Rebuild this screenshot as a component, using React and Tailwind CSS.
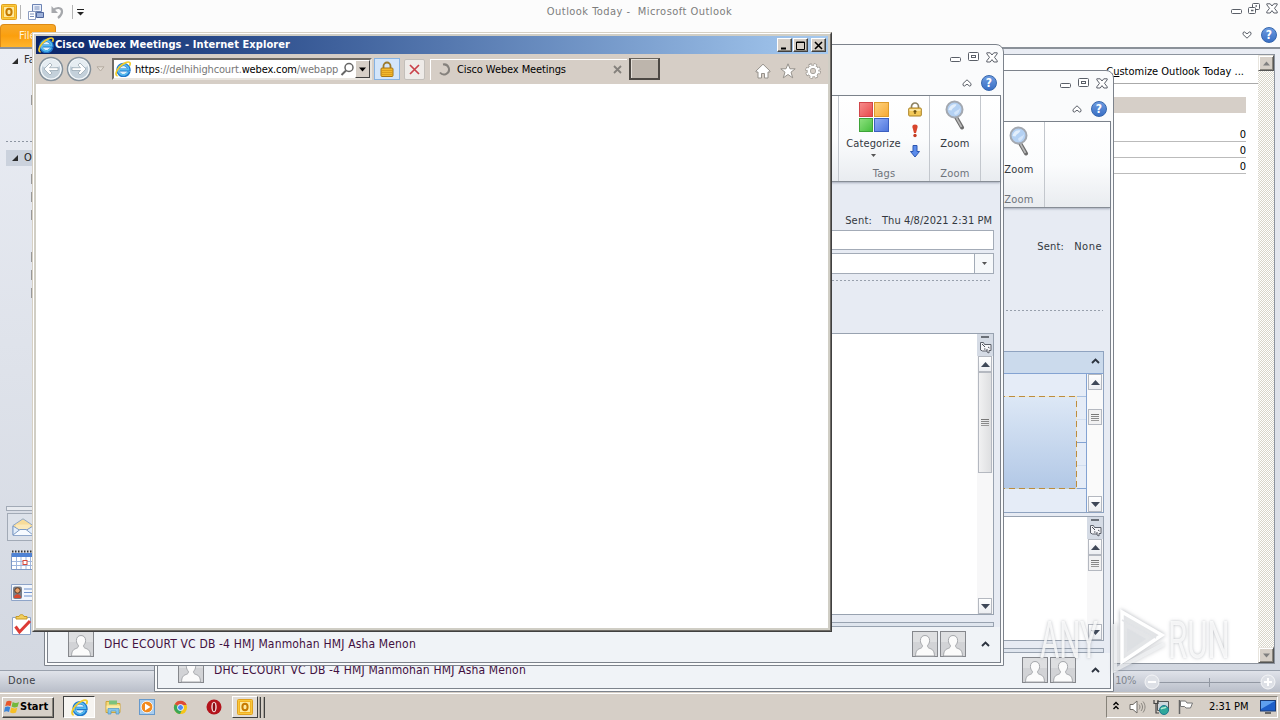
import clsx from "clsx";

/* ---------- icons ---------- */

function IeIcon({ size = 16 }) {
  return (
    <svg width={size} height={size} viewBox="0 0 16 16" className="shrink-0">
      <circle cx="8" cy="8.500" r="5" fill="#dff1fc" />
      <path
        d="M13.900 10.600A5.600 5.600 0 1 1 14.100 9H5"
        fill="none"
        stroke="#1f78cc"
        strokeWidth="3.200"
      />
      <path
        d="M13.300 10.600A5.200 5.200 0 1 1 13.600 8.600H5"
        fill="none"
        stroke="#58bdf0"
        strokeWidth="1.600"
      />
      <path
        d="M2.600 14.800C.2 14.800.4 10.600 4.200 6.400 8 2.200 13 .2 14.600 1.400c.9.7.6 2-.1 3.400"
        fill="none"
        stroke="#f2cb2a"
        strokeWidth="1.700"
      />
    </svg>
  );
}

function OutlookIcon({ size = 16 }) {
  return (
    <svg width={size} height={size} viewBox="0 0 16 16" className="shrink-0">
      <rect x=".5" y=".5" width="15" height="15" rx="1" fill="#f8c93c" stroke="#e0a020" />
      <rect x="2.5" y="2.5" width="11" height="11" fill="#fdeaa0" stroke="#f4b223" />
      <ellipse cx="8" cy="8" rx="2.6" ry="3.2" fill="none" stroke="#c67a00" strokeWidth="2" />
    </svg>
  );
}

function HelpIcon() {
  return (
    <span className="flex size-4 shrink-0 items-center justify-center rounded-full border border-[#3566ad] bg-linear-to-b from-[#6d9be0] to-[#3a6fc4] text-[12px] leading-none font-bold text-white">
      ?
    </span>
  );
}

function MinGlyph() {
  return (
    <svg width="11" height="12" viewBox="0 0 11 12">
      <rect x=".5" y="6.5" width="10" height="4" rx="1" fill="#fff" stroke="#5a5f68" />
    </svg>
  );
}

function MaxGlyph() {
  return (
    <svg width="11" height="12" viewBox="0 0 11 12">
      <rect x=".5" y="1.500" width="10" height="8" rx="1" fill="#fff" stroke="#5a5f68" />
      <rect x="3.5" y="4.5" width="4" height="2" fill="#fff" stroke="#5a5f68" />
    </svg>
  );
}

function RestoreGlyph() {
  return (
    <svg width="12" height="12" viewBox="0 0 12 12">
      <rect x="4.5" y=".5" width="7" height="6" rx="1" fill="#fff" stroke="#5a5f68" />
      <rect x=".5" y="4.5" width="7" height="6" rx="1" fill="#fff" stroke="#5a5f68" />
      <path d="M3 7.5h2.500M7.500 3H9" stroke="#5a5f68" strokeWidth="1.500" />
    </svg>
  );
}

function CloseGlyph() {
  return (
    <svg width="12" height="11" viewBox="0 0 12 11">
      <path
        d="M.8.8h3.4L6 3 7.800.8h3.400v1L8.500 5.300l2.700 3.500v1.200H7.800L6 7.600 4.200 10H.8V8.800L3.500 5.300.8 1.800z"
        fill="#fff"
        stroke="#5a5f68"
      />
    </svg>
  );
}

function Collapse({ down }) {
  return (
    <svg width="10" height="8" viewBox="0 0 10 8" className={clsx(down && "rotate-180")}>
      <path
        d="M5 .8 9 4.600v1.700L7.800 7.200 5 5.200 2.200 7.200 1 6.300V4.600z"
        fill="#fff"
        stroke="#5a5f68"
      />
    </svg>
  );
}

function Chevron() {
  return (
    <svg width="9" height="6" viewBox="0 0 9 6">
      <path d="M1 5 4.500 1.600 8 5" fill="none" stroke="#2c333f" strokeWidth="1.9" />
    </svg>
  );
}

function Person() {
  return (
    <svg width="26" height="26" viewBox="0 0 26 26" className="shrink-0">
      <rect x=".5" y=".5" width="25" height="25" fill="#d2d3d6" stroke="#85878c" />
      <path d="M1 1h24v10H1z" fill="#dedfe1" />
      <path
        d="M13 4.500c3 0 4.600 2.200 4.600 5 0 2-.8 3.600-1.900 4.700-.3 1.800.3 2.600 2 3.200 3 1 4.600 2.500 4.800 7.600h-19c.2-5.100 1.800-6.600 4.800-7.600 1.700-.6 2.300-1.400 2-3.200C9.200 13.100 8.400 11.500 8.400 9.500c0-2.800 1.600-5 4.600-5z"
        fill="#fbfbfb"
        stroke="#a5a7ab"
      />
    </svg>
  );
}

function ZoomIcon() {
  return (
    <svg width="20" height="30" viewBox="0 0 20 30">
      <path d="m11.500 18 5.500 9.500" stroke="#6d6d6d" strokeWidth="4" strokeLinecap="round" />
      <path d="m11.500 18 5 9" stroke="#b9b9b9" strokeWidth="1.600" />
      <circle cx="9.500" cy="9.500" r="8" fill="#b4d1f3" stroke="#a3a8b0" strokeWidth="2" />
      <path d="M3.500 10c1-4 4-6.500 8-5.500-1 3-4 3-5 6z" fill="#e3effc" />
      <path d="M9 13c2-3 4-2 6-5-.2 4-2.500 7-5 7z" fill="#d3e5fa" />
    </svg>
  );
}

function SplitIcon() {
  return (
    <svg width="13" height="13" viewBox="0 0 13 13">
      <path
        d="M1.500 1.500h3l1 2h6.500v6h-2v2.500l-2-1v-1H3.500l-2-1z"
        fill="#f5f5f8"
        stroke="#5c606a"
      />
      <path d="m3 3 3 3M9 6l1.500 1M5 8h1.500M8 8v2" stroke="#4a4f5a" />
    </svg>
  );
}

function Triangle({ up, className }) {
  return (
    <svg width="9" height="5" viewBox="0 0 9 5" className={clsx(up && "rotate-180", className)}>
      <path d="M0 0h9L4.500 5z" fill="currentColor" />
    </svg>
  );
}

function TreeArrow() {
  return (
    <svg width="6" height="6" viewBox="0 0 6 6" className="shrink-0">
      <path d="M6 0v6H0z" fill="#2b2b2b" />
    </svg>
  );
}

function ChromeIcon() {
  return (
    <svg width="15" height="15" viewBox="0 0 16 16">
      <circle cx="8" cy="8" r="7" fill="#f5c518" />
      <path d="M8 8 1.900 4.500A7 7 0 0 1 14.500 5.200H8z" fill="#dd4b39" />
      <path d="M8 8 1.900 4.500A7 7 0 0 0 7.500 15L10 9.500z" fill="#3aa757" />
      <circle cx="8" cy="8" r="3.200" fill="#4a8af4" stroke="#fff" />
    </svg>
  );
}

function LockIcon() {
  return (
    <svg width="14" height="16" viewBox="0 0 14 16">
      <path d="M3.500 8V5a3.500 3.500 0 0 1 7 0v3" fill="none" stroke="#9c7a2c" strokeWidth="1.800" />
      <rect x="1" y="7" width="12" height="8.500" rx="1" fill="#f2b92e" stroke="#a87512" />
      <path d="M2 9.500h10M2 11.500h10M2 13.500h10" stroke="#d4941c" strokeWidth=".8" />
    </svg>
  );
}

function PermissionIcon() {
  return (
    <svg width="14" height="15" viewBox="0 0 14 15">
      <path d="M3.500 7V4.500a3.500 3.500 0 0 1 7 0V7" fill="none" stroke="#8d8262" strokeWidth="1.700" />
      <rect x=".7" y="6" width="12.600" height="8" rx="1" fill="#f3c95a" stroke="#a98024" />
      <path d="M1.500 7h11v2h-11z" fill="#fbe39a" />
      <path d="M7 8v4M5.500 9.500h3" stroke="#6b5010" strokeWidth="1.400" />
    </svg>
  );
}

/* ---------- outlook scroll pieces ---------- */

function ScrollButton({ up }) {
  return (
    <div className="flex h-4 w-3.5 shrink-0 items-center justify-center border border-[#b4b8c0] bg-linear-to-b from-white to-[#eceef2] text-[#3f4858]">
      <Triangle up={up} />
    </div>
  );
}

function Grip() {
  return (
    <div className="flex w-2 flex-col gap-px">
      <i className="h-px bg-[#777]" />
      <i className="h-px bg-[#888]" />
      <i className="h-px bg-[#888]" />
      <i className="h-px bg-[#999]" />
    </div>
  );
}

function SplitHandle() {
  return (
    <div className="flex h-[22px] w-full shrink-0 flex-col items-center bg-[#d5dbe5] pt-0.5">
      <i className="mb-[3px] h-0.5 w-2 bg-[#6b7078]" />
      <SplitIcon />
    </div>
  );
}

/* ---------- message windows ---------- */

function RibbonGroup({ label, className, children }) {
  return (
    <div
      className={clsx(
        "flex shrink-0 flex-col items-center justify-between border-l border-[#c3c7cd] pb-[2px]",
        className
      )}
    >
      {children}
      {label && <span className="leading-[11px] tracking-[0.2px] text-[#6e737b]">{label}</span>}
    </div>
  );
}

function ZoomGroup() {
  return (
    <RibbonGroup label="Zoom" className="w-[51px]">
      <div className="flex flex-col items-center gap-[7px] pt-1">
        <ZoomIcon />
        <span className="leading-[14px] tracking-[0.2px]">Zoom</span>
      </div>
      <div className="grow" />
    </RibbonGroup>
  );
}

function TagsGroup() {
  return (
    <RibbonGroup label="Tags" className="w-[91px]">
      <div className="flex w-full grow pt-1.5">
        <div className="flex w-[69px] flex-col items-center">
          <div className="grid size-[30px] grid-cols-2 gap-px">
            <i className="border border-[#d0464a] bg-linear-to-br from-[#f58a8a] to-[#e8484c]" />
            <i className="border border-[#dc9a2c] bg-linear-to-br from-[#fdd27a] to-[#f7ab34]" />
            <i className="border border-[#3da338] bg-linear-to-br from-[#8ae07c] to-[#45bf3e]" />
            <i className="border border-[#3b5fc0] bg-linear-to-br from-[#8fabf5] to-[#4f76dd]" />
          </div>
          <span className="mt-[5px] leading-[14px] tracking-[0.1px]">Categorize</span>
          <Triangle className="mt-0.5 w-[5px] text-[#555]" />
        </div>
        <div className="flex flex-col items-center gap-[7px]">
          <PermissionIcon />
          <svg width="8" height="14" viewBox="0 0 8 13">
            <path d="M4 0c2 0 3 1 2.500 3L5 8.500H3L1.500 3C1 1 2 0 4 0z" fill="#d8452c" />
            <circle cx="4" cy="11" r="1.700" fill="#c23a22" />
          </svg>
          <svg width="10" height="13" viewBox="0 0 10 13">
            <path d="M3 .5h4v6h2.500L5 12 .5 6.500H3z" fill="#5b8cec" stroke="#2c56b0" />
          </svg>
        </div>
      </div>
    </RibbonGroup>
  );
}

function MessageWindow({ className, ribbon, children }) {
  return (
    <div
      className={clsx(
        "absolute flex h-[622px] w-[960px] flex-col rounded-t-lg border border-[#7d838c] bg-[#fafbfc] text-[#333840]",
        className
      )}
    >
      <div className="flex h-[50px] shrink-0 flex-col">
        <div className="flex h-6 items-center justify-end gap-[7px] pr-[5px]">
          <MinGlyph />
          <MaxGlyph />
          <CloseGlyph />
        </div>
        <div className="flex h-[26px] items-center justify-end gap-[9px] pt-0.5 pr-[6px]">
          <Collapse />
          <HelpIcon />
        </div>
      </div>
      <div className="mx-0.5 mb-0.5 flex grow flex-col border border-[#7d838c] bg-[#e7ebf3]">
        <div className="flex h-[86px] shrink-0 justify-end border-b border-[#878d96] bg-linear-to-b from-white via-[#fbfcfd] to-[#e9ecf0] shadow-[0_1px_2px_rgba(100,110,130,0.5)]">
          {ribbon}
        </div>
        {children}
        <div className="mt-[7px] mr-[6px] h-[5px] shrink-0 border border-[#98a2b0] bg-[#dfe5ee]" />
        <div className="flex h-[35px] shrink-0 items-center bg-[#f0f3f7] pr-[10px] pb-0.5 pl-5">
          <Person />
          <span className="ml-2.5 grow text-[12px] tracking-[0.16px] whitespace-nowrap text-[#42103f]">
            DHC ECOURT VC DB -4 HMJ Manmohan HMJ Asha Menon
          </span>
          <div className="flex gap-0.5">
            <Person />
            <Person />
          </div>
          <div className="ml-[15px]">
            <Chevron />
          </div>
        </div>
      </div>
    </div>
  );
}

function MailWindow() {
  return (
    <MessageWindow
      className="top-[44px] left-[44px]"
      ribbon={
        <>
          <TagsGroup />
          <ZoomGroup />
          <RibbonGroup className="w-5" />
        </>
      }
    >
      <div className="flex h-[48px] shrink-0 items-end justify-end gap-[10px] pr-2 pb-[2px] leading-[14px]">
        <span className="tracking-[0.2px]">Sent:</span>
        <span className="tracking-[0.04px]">Thu 4/8/2021 2:31 PM</span>
      </div>
      <div className="mr-[6px] h-[20px] shrink-0 border border-[#a3abb7] bg-white" />
      <div className="mt-[3px] mr-[6px] flex h-[21px] shrink-0 border border-[#a3abb7] bg-white">
        <div className="grow" />
        <div className="flex w-[19px] items-center justify-center border-l border-[#a3abb7] bg-[#f6f8fa] text-[#555]">
          <Triangle className="w-[5px]" />
        </div>
      </div>
      <div className="mt-1.5 mr-[8px] h-px shrink-0 bg-[repeating-linear-gradient(90deg,#98a0ac_0_2px,transparent_2px_4px)]" />
      <div className="mt-[52px] mr-[6px] flex grow justify-end border border-[#98a2b0] bg-white">
        <div className="flex w-4 flex-col items-center bg-[#f7f7f8]">
          <SplitHandle />
          <ScrollButton up />
          <div className="flex h-[101px] w-3.5 items-center justify-center border border-[#b4b8c0] bg-linear-to-r from-[#f1f1f2] to-[#dedfe1]">
            <Grip />
          </div>
          <div className="grow" />
          <ScrollButton />
        </div>
      </div>
    </MessageWindow>
  );
}

function MeetingWindow() {
  return (
    <MessageWindow
      className="top-[70px] left-[154px]"
      ribbon={
        <>
          <ZoomGroup />
          <RibbonGroup className="w-[66px]" />
        </>
      }
    >
      <div className="flex h-[48px] shrink-0 items-end justify-end gap-[10px] pr-2 pb-[2px] leading-[14px]">
        <span className="tracking-[0.2px]">Sent:</span>
        <span className="tracking-[0.5px]">None</span>
      </div>
      <div className="mt-[54px] mr-[7px] h-px shrink-0 bg-[repeating-linear-gradient(90deg,#98a0ac_0_2px,transparent_2px_4px)]" />
      <div className="mt-10 mr-[6px] flex h-[162px] shrink-0 flex-col border border-[#8fa3c0] bg-[#e5ecf7]">
        <div className="flex h-[22px] shrink-0 items-center justify-end border-b border-[#84a3d2] bg-[#cbdaec] pr-[3px] pb-1">
          <Chevron />
        </div>
        <div className="flex grow">
          <div className="flex grow flex-col border-r border-[#84a3d2]">
            <div className="h-[23px] border-b border-[#a9c0e0]" />
            <div className="flex h-[92px]">
              <div className="-mt-px flex h-[93px] grow flex-col bg-linear-to-b from-[#dde8f6] to-[#b2c8e6]">
                <i className="h-px bg-[repeating-linear-gradient(90deg,#bd8c3c_0_6px,#f4e6c4_6px_10px)]" />
                <i className="w-px grow self-end bg-[repeating-linear-gradient(180deg,#f4e6c4_0_4px,#bd8c3c_4px_10px)]" />
                <i className="h-px bg-[repeating-linear-gradient(90deg,#bd8c3c_0_6px,#c8d3cc_6px_10px)]" />
              </div>
              <div className="flex w-[9px] flex-col">
                <i className="h-[23px] border-b border-[#d2deef]" />
                <i className="h-[23px] border-b border-[#84a3d2]" />
                <i className="h-[23px] border-b border-[#d2deef]" />
                <i className="h-[23px] border-b border-[#84a3d2]" />
              </div>
            </div>
            <div className="grow" />
          </div>
          <div className="flex w-4 flex-col items-center bg-[#fafafa]">
            <ScrollButton up />
            <div className="mt-[19px] flex h-4 w-3.5 items-center justify-center border border-[#b4b8c0] bg-[#f1f1f2]">
              <Grip />
            </div>
            <div className="grow" />
            <ScrollButton />
          </div>
        </div>
      </div>
      <div className="mt-[3px] mr-[6px] flex grow justify-end border border-[#98a2b0] bg-white">
        <div className="flex w-4 flex-col items-center bg-[#f7f7f8]">
          <SplitHandle />
          <ScrollButton up />
          <div className="flex h-4 w-3.5 items-center justify-center border border-[#b4b8c0] bg-[#f1f1f2]">
            <Grip />
          </div>
          <div className="grow" />
          <ScrollButton />
        </div>
      </div>
    </MessageWindow>
  );
}

/* ---------- outlook main window ---------- */

function ClassicScrollButton({ up }) {
  return (
    <div className="flex size-4 items-center justify-center border border-t-[#e8e5de] border-r-[#555] border-b-[#555] border-l-[#e8e5de] bg-[#d6cfc7] text-[#808080] shadow-[inset_1px_1px_#fff,inset_-1px_-1px_#8a867e]">
      <Triangle up={up} className="w-[7px]" />
    </div>
  );
}

function NavPane() {
  return (
    <div className="flex w-11 shrink-0 flex-col pl-1.5 whitespace-nowrap">
      <div className="flex h-[23px] items-center gap-1.5 pl-1.5 text-[#333]">
        <TreeArrow />
        <span>Favorites</span>
      </div>
      <div className="mt-[23px] ml-[25px] h-2.5 w-1 bg-[#999]" />
      <div className="mt-[36px] h-px bg-[repeating-linear-gradient(90deg,#8d95a2_0_2px,transparent_2px_4px)]" />
      <div className="mt-2 flex h-4 items-center gap-1.5 bg-[#cbd2dd] pl-1.5 text-[#222]">
        <TreeArrow />
        <span>Outlook</span>
      </div>
      <div className="mt-2 ml-[25px] flex w-1 flex-col gap-2">
        <i className="h-2.5 bg-[#999]" />
        <i className="h-2.5 bg-[#999]" />
        <i className="mb-6 h-2.5 bg-[#999]" />
        <i className="h-2.5 bg-[#999]" />
        <i className="h-2.5 bg-[#999]" />
        <i className="h-2.5 bg-[#999]" />
      </div>
      <div className="grow" />
      <div className="h-[5px] border border-[#a2aab6] bg-[#e8ebf0]" />
      <div className="mt-0.5 ml-px flex h-7 items-center border border-[#a2aab6] bg-[#dde2ea] pl-1">
        <svg width="22" height="20" viewBox="0 0 22 18">
          <path d="M1 7.500 11 .8l10 6.700v9.700H1z" fill="#f8dc9a" stroke="#8fa7c8" />
          <path d="M4 6.500h14v6H4z" fill="#fbe9bb" />
          <path d="m1 8 8 5h4l8-5v9.200H1z" fill="#e3eefb" stroke="#7e9cc6" />
          <path d="m1 17 7-5.500h6l7 5.500" fill="#f6faff" stroke="#7e9cc6" />
        </svg>
      </div>
      <svg width="24" height="20" viewBox="0 0 24 20" className="mt-[9px] ml-[5px]">
        <path d="M.5 3.500h23v16H.5z" fill="#fff" stroke="#7f99c4" />
        <path d="M1 3h22v4H1z" fill="#4f83d4" />
        <path d="M1 1.500h22" stroke="#333" strokeWidth="2" strokeDasharray="1.500 1.500" />
        <path d="M1 11.500h22M1 15.500h22M5.500 7v12M10 7v12M15 7v12M19.500 7v12" stroke="#9fb6dd" />
        <rect x="12" y="10.500" width="4" height="4" fill="#fff" stroke="#d5473a" />
      </svg>
      <svg width="24" height="18" viewBox="0 0 24 18" className="mt-[14px] ml-[5px]">
        <path d="M.5.5h23v16H.5z" fill="#f3f7fd" stroke="#8ea4c8" />
        <rect x="2" y="2.500" width="9" height="12.500" rx="2" fill="#777d88" />
        <circle cx="6.500" cy="6.500" r="2.700" fill="#e8a06a" stroke="#5b3a22" />
        <path d="M3 14c0-5 7-5 7 0z" fill="#d8492f" />
        <path d="M13 5h9M13 8.500h9M13 12h9" stroke="#6f93cf" />
      </svg>
      <svg width="20" height="21" viewBox="0 0 20 21" className="mt-3 mb-[35px] ml-[6px]">
        <path d="M.5 3.500h18v17H.5z" fill="#fff" stroke="#8ea4c8" />
        <path d="M4 5V2.500h3C7.500 0 11.500 0 12 2.500h3V5z" fill="#f3cf5e" stroke="#c79a25" />
        <path d="m3.500 12.500 4 5.500L18 7" fill="none" stroke="#dd3b35" strokeWidth="3" />
      </svg>
    </div>
  );
}

function OutlookWindow() {
  return (
    <div className="absolute inset-x-0 top-0 flex h-[692px] flex-col bg-[#fcfcfc]">
      <div className="flex h-6 shrink-0 items-center">
        <div className="flex flex-1 items-center pl-px">
          <OutlookIcon />
          <i className="mr-[7px] ml-[3px] h-3.5 w-px bg-[#b5b5b5]" />
          <svg width="17" height="16" viewBox="0 0 17 16">
            <path d="M4.500.5h9v7h-9z" fill="#e8eefa" stroke="#6d84b4" />
            <path d="M.5 7.500h7v8h-7z" fill="#fff" stroke="#8b9cc0" />
            <path d="M2 10h4M2 12.500h4M6.500 3h5M6.500 5h5" stroke="#7f93bd" />
            <path d="M8.500 8.500h7v5h-7z" fill="#9db1da" stroke="#4d659c" />
          </svg>
          <svg width="14" height="14" viewBox="0 0 14 14" className="ml-[6px]">
            <path d="M2 5.500C5 2 11 2 11 6.500c0 3-2 5-4 6.500" fill="none" stroke="#a6a8ac" strokeWidth="2.200" />
            <path d="M.5 1v7h6.500z" fill="#a6a8ac" />
          </svg>
          <i className="mr-[4px] ml-[7px] h-3.5 w-px bg-[#b5b5b5]" />
          <svg width="7" height="7" viewBox="0 0 7 7">
            <path d="M0 .5h7" stroke="#222" />
            <path d="M0 3h7L3.500 6.500z" fill="#222" />
          </svg>
        </div>
        <span className="pt-px tracking-[0.46px] text-[#7d7d7d]">
          Outlook Today -&nbsp; Microsoft Outlook
        </span>
        <div className="flex flex-1 items-center justify-end gap-[6px] pr-0.5 pb-[7px]">
          <MinGlyph />
          <RestoreGlyph />
          <CloseGlyph />
        </div>
      </div>
      <div className="flex h-[23px] shrink-0 items-center">
        <div className="flex h-full w-14 items-center rounded-t border border-b-0 border-[#dd8a14] bg-linear-to-b from-[#f7a928] via-[#fb9f0c] to-[#ffb52c] pl-[18px] text-[#fff3d8]">
          File
        </div>
        <div className="flex grow items-center justify-end gap-[9px] pr-[3px] pb-px">
          <Collapse down />
          <HelpIcon />
        </div>
      </div>
      <div className="flex h-[623px] shrink-0 border-t-2 border-[#8b9199] bg-linear-to-b from-[#eaedf4] to-[#d3d8e1]">
        <NavPane />
        <div className="mt-[5px] mr-[5px] mb-[6px] flex grow border border-[#8d949e] bg-white">
          <div className="flex grow flex-col text-[11px] text-black">
            <div className="flex h-[29px] shrink-0 items-center justify-end border-b border-[#aaa] pt-[6px] pr-[14px]">
              <span>
                C<u>u</u>stomize Outlook Today ...
              </span>
            </div>
            <div className="mr-3 flex flex-col">
              <div className="mt-[13px] mb-[13px] h-4 bg-[#d6cfc8]" />
              <div className="flex h-4 items-end justify-end border-b border-[#bbb] leading-[13px]">0</div>
              <div className="flex h-4 items-end justify-end border-b border-[#bbb] leading-[13px]">0</div>
              <div className="flex h-4 items-end justify-end border-b border-[#bbb] leading-[13px]">0</div>
            </div>
          </div>
          <div className="flex w-4 flex-col justify-between bg-[repeating-conic-gradient(#fff_0_25%,#d9d6ca_0_50%)] bg-size-[2px_2px]">
            <ClassicScrollButton up />
            <ClassicScrollButton />
          </div>
        </div>
      </div>
      <div className="flex h-[22px] shrink-0 items-center border-t border-[#9aa1ad] bg-linear-to-b from-[#e0e3ea] to-[#b9bec9] pl-2 text-[#3c4047]">
        <span className="grow tracking-[0.45px]">Done</span>
        <span className="mr-2 tracking-[-0.4px] text-[#81868f]">10%</span>
        <svg width="136" height="16" viewBox="0 0 136 16">
          <path d="M15 8.500h106" stroke="#9298a3" />
          <path d="M65.500 4v9" stroke="#9298a3" />
          <circle cx="8" cy="8" r="7" fill="#dde0e6" stroke="#f4f5f7" />
          <circle cx="124" cy="8" r="7" fill="#dde0e6" stroke="#f4f5f7" />
          <path d="M4 8h8M120 8h8M124 4v8" stroke="#fff" strokeWidth="2" />
        </svg>
      </div>
    </div>
  );
}

/* ---------- internet explorer ---------- */

function CaptionButton({ className, children }) {
  return (
    <div
      className={clsx(
        "flex h-3.5 w-[15px] items-center justify-center border border-t-white border-r-[#404040] border-b-[#404040] border-l-white bg-[#d6cfc7] shadow-[inset_-1px_-1px_#868279]",
        className
      )}
    >
      <svg width="9" height="9" viewBox="0 0 9 9" fill="none" stroke="#000">
        {children}
      </svg>
    </div>
  );
}

function NavArrow({ flip }) {
  return (
    <svg width="26" height="26" viewBox="0 0 26 26" className={clsx(flip && "-scale-x-100")}>
      <circle cx="13" cy="13" r="11.500" fill="#d5dee5" stroke="#84909a" strokeWidth="1.500" />
      <circle cx="13" cy="13" r="10" fill="#c3d0da" stroke="#f5f9fb" strokeWidth="1.200" />
      <path d="M4 10a9.500 9.500 0 0 1 18 0c-5 3-13 3-18 0z" fill="#e6edf2" />
      <path
        d="M6 13l6-6 2 2-2.500 2.700H20v2.800h-8.500L14 17l-2 2z"
        fill="#fff"
        stroke="#8fa0ac"
        strokeWidth=".7"
      />
    </svg>
  );
}

function BrowserWindow() {
  return (
    <div className="absolute top-8 left-8 h-[600px] w-[800px] border border-t-[#d6d0c4] border-r-[#404040] border-b-[#404040] border-l-[#d6d0c4]">
      <div className="flex h-full flex-col border border-t-white border-r-[#6e6b66] border-b-[#6e6b66] border-l-white">
        <div className="flex grow flex-col border-2 border-[#d0cec5] bg-white">
          <div className="flex h-[18px] shrink-0 items-center bg-linear-to-r from-[#0a246a] to-[#a6caf0] pr-[2px] pl-0.5">
            <IeIcon />
            <span className="ml-px grow font-bold tracking-[0.08px] whitespace-nowrap text-white">
              Cisco Webex Meetings - Internet Explorer
            </span>
            <CaptionButton>
              <path d="M1 7.500h5" strokeWidth="2" />
            </CaptionButton>
            <CaptionButton className="ml-px">
              <path d="M.5 1h8v7.500h-8z" />
              <path d="M0 1.500h9" />
            </CaptionButton>
            <CaptionButton className="ml-[3px]">
              <path d="m1 1 7 7M8 1 1 8" strokeWidth="1.600" />
            </CaptionButton>
          </div>
          <div className="flex h-[30px] shrink-0 items-center bg-[#d6cec6] pl-[2px]">
            <NavArrow />
            <div className="ml-0.5">
              <NavArrow flip />
            </div>
            <svg width="9" height="6" viewBox="0 0 9 6" className="ml-1">
              <path d="M1 .8h7L4.500 5z" fill="#e3ddd5" stroke="#b5aca1" />
            </svg>
            <div className="ml-[7px] flex h-[22px] w-[260px] items-center border-2 border-t-[#6f6b65] border-r-[#e9e5df] border-b-[#e9e5df] border-l-[#6f6b65] bg-white pl-px">
              <IeIcon />
              <span className="ml-[4px] w-[205px] pt-px leading-4 tracking-[-0.15px] whitespace-nowrap text-[#777]">
                <span className="text-black">https</span>://delhihighcourt.
                <span className="text-black">webex.com</span>/webapp
              </span>
              <svg width="15" height="14" viewBox="0 0 15 14" className="shrink-0">
                <circle cx="9" cy="5.500" r="4" fill="none" stroke="#666" strokeWidth="1.500" />
                <path d="m6 8.500-4.500 4.500" stroke="#666" strokeWidth="2" />
              </svg>
              <div className="ml-auto flex h-full w-[15px] shrink-0 items-center justify-center border border-t-white border-r-[#404040] border-b-[#404040] border-l-white bg-[#d6cfc7]">
                <Triangle className="w-[7px]" />
              </div>
            </div>
            <div className="ml-[2px] flex h-[22px] w-[26px] items-center justify-center border border-[#86b2e2] bg-[#d3e5fa]">
              <LockIcon />
            </div>
            <div className="ml-[4px] flex h-[21px] w-[21px] items-center justify-center rounded-xs border border-[#c3bfba] bg-[#eeebe8]">
              <svg width="11" height="11" viewBox="0 0 11 11">
                <path d="m1 1 9 9M10 1l-9 9" stroke="#c94049" strokeWidth="1.700" />
              </svg>
            </div>
            <div className="ml-[5px] flex h-[21px] w-[197px] items-center border border-r-0 border-b-0 border-white pr-[5px] pl-[7px] text-black">
              <svg width="13" height="13" viewBox="0 0 13 13">
                <path d="M5 1.500a5 5 0 1 1-3 8" fill="none" stroke="#85817c" strokeWidth="2" />
              </svg>
              <span className="ml-[6px] grow pt-0.5 tracking-[-0.1px] whitespace-nowrap">Cisco Webex Meetings</span>
              <svg width="9" height="9" viewBox="0 0 9 9">
                <path d="m1 1 7 7M8 1 1 8" stroke="#85817c" strokeWidth="1.800" />
              </svg>
            </div>
            <div className="ml-[2px] h-[22px] w-[31px] border border-t-[#6b665f] border-r-2 border-r-[#4c4843] border-b-2 border-b-[#4c4843] border-l-2 border-l-[#4c4843] bg-[#bdb5ac] shadow-[inset_1px_1px_#e4dfd8]" />
            <div className="flex grow items-center justify-end gap-[9px] pt-1 pr-[7px]">
              <svg width="16" height="16" viewBox="0 0 16 16">
                <path
                  d="M8 1.200 15 8v1h-2v6H9.500v-4.500h-3V15H3V9H1V8z"
                  fill="#fff"
                  stroke="#95918b"
                />
              </svg>
              <svg width="16" height="16" viewBox="0 0 16 16">
                <path
                  d="m8 .8 2 5h5.200L11 9.200l1.700 5.600L8 11.500l-4.700 3.300L5 9.200.8 5.800H6z"
                  fill="#fff"
                  stroke="#95918b"
                />
              </svg>
              <svg width="16" height="16" viewBox="0 0 16 16">
                <circle cx="8" cy="8" r="6.300" fill="none" stroke="#95918b" strokeWidth="3" strokeDasharray="2.900 2.050" />
                <circle cx="8" cy="8" r="4.300" fill="none" stroke="#95918b" strokeWidth="4" />
                <circle cx="8" cy="8" r="6.200" fill="none" stroke="#fff" strokeWidth="1.800" strokeDasharray="2.100 2.770" strokeDashoffset="-.4" />
                <circle cx="8" cy="8" r="4.200" fill="none" stroke="#fff" strokeWidth="2.600" />
              </svg>
            </div>
          </div>
        </div>
      </div>
    </div>
  );
}

/* ---------- taskbar ---------- */

function Taskbar() {
  return (
    <div className="absolute inset-x-0 bottom-0 flex h-7 items-center border-t border-[#d6cfc7] bg-[#d6cfc7] pt-px pr-0.5 pl-0.5 text-black shadow-[inset_0_1px_#fff]">
      <div className="flex h-[21px] w-[52px] items-center border border-t-white border-r-[#404040] border-b-[#404040] border-l-white pl-px shadow-[inset_-1px_-1px_#868279]">
        <svg width="16" height="16" viewBox="0 0 16 16" className="shrink-0">
          <path d="M2.500 2.500c2-1.300 3.700-1 5.200 0L6.500 7.300C5 6.400 3 6.300 1.200 7.300z" fill="#e8562a" />
          <path d="M8.700 3c1.800 1.100 4 1.300 6.300 0l-1.400 4.700c-2 1.200-4.200 1-6-.1z" fill="#74b83e" />
          <path d="M1 8.300c1.800-1 3.700-1 5.200 0L5 13c-1.700-1-3.400-1-5 0z" fill="#3b84d8" />
          <path d="M7.300 8.600c1.800 1 4 1.200 6 .1L12 13.400c-2 1.200-4.200 1-6-.1z" fill="#f6bf26" />
        </svg>
        <span className="text-[11px] font-bold">Start</span>
      </div>
      <div className="ml-[9px] flex h-[22px] w-8 items-center justify-center border border-t-[#404040] border-r-white border-b-white border-l-[#404040] bg-[#f6f4f1]">
        <IeIcon size={17} />
      </div>
      <svg width="17" height="16" viewBox="0 0 17 16" className="ml-[10px]">
        <path d="M1 2.500h5l1.500 2H15v9H1z" fill="#f5d877" stroke="#cda53a" />
        <path d="M4 1.500h8v4H4z" fill="#7cc27d" />
        <path d="M1.500 6.500h13.500v4H1.500z" fill="#fbeaa7" />
        <path d="M3 15V9.500h11V15h-3v-3H6v3z" fill="#86c5ea" stroke="#4f97c9" strokeWidth=".7" />
      </svg>
      <svg width="16" height="16" viewBox="0 0 16 16" className="ml-[17px]">
        <rect x=".5" y=".5" width="15" height="15" fill="#a9cdee" stroke="#6699cc" />
        <circle cx="8" cy="8" r="5.800" fill="#f28a1e" stroke="#fff" strokeWidth=".8" />
        <path d="M6 4.500 11.500 8 6 11.500z" fill="#fff" />
      </svg>
      <div className="ml-[18px]">
        <ChromeIcon />
      </div>
      <svg width="16" height="16" viewBox="0 0 16 16" className="ml-[18px]">
        <circle cx="8" cy="8" r="7.500" fill="#b3131b" />
        <ellipse cx="8" cy="8" rx="2.700" ry="5.200" fill="#f4dede" />
        <ellipse cx="8" cy="8" rx="1.300" ry="4.200" fill="#8b0a12" />
      </svg>
      <div className="ml-[10px] flex h-[22px] w-[26px] items-center justify-center border border-t-white border-r-[#404040] border-b-[#404040] border-l-white bg-[#e2ddd7]">
        <OutlookIcon />
      </div>
      <i className="ml-px h-[21px] w-0.5 border-r border-[#404040] bg-[#a9a49b]" />
      <i className="ml-0.5 h-[21px] w-0.5 border-r border-[#404040] bg-[#a9a49b]" />
      <div className="grow" />
      <div className="flex h-[22px] w-[172px] items-center border border-t-[#868279] border-r-white border-b-white border-l-[#868279] pl-1.5">
        <svg width="6" height="9" viewBox="0 0 6 9" fill="none" stroke="#000" strokeWidth="1.400" className="mb-1">
          <path d="m.5 4 2.500-2.500L5.500 4M.5 8 3 5.500 5.500 8" />
        </svg>
        <svg width="17" height="16" viewBox="0 0 17 16" className="ml-2.5">
          <path d="M1 5.500h3L8 2v12l-4-3.500H1z" fill="#fff" stroke="#6f6b66" />
          <path d="M10 5.500c1.300 1.500 1.300 3.500 0 5M12 4c2 2.500 2 5.500 0 8M14 2.500c2.700 3.500 2.700 7.500 0 11" fill="none" stroke="#8a8680" />
        </svg>
        <svg width="17" height="16" viewBox="0 0 17 16" className="ml-[7px]">
          <path d="M4.500 2.500h11v9h-11z" fill="#cfd8dd" stroke="#555" />
          <path d="M1 1v3.500h4V1M3 4.500V14h3" fill="none" stroke="#444" strokeWidth="1.200" />
          <circle cx="11" cy="11" r="4.500" fill="#2fa79a" stroke="#1e7891" />
          <path d="M8 10c2-2 3 0 5-2" fill="none" stroke="#b5ecd0" strokeWidth="1.500" />
        </svg>
        <svg width="17" height="16" viewBox="0 0 17 16" className="ml-[7px]">
          <path d="M2.500 1v14" stroke="#666" strokeWidth="1.500" />
          <path d="M3.500 2h5l1.500 2h5.500l-2 5H9L7.500 7.500h-4z" fill="#fff" stroke="#777" />
        </svg>
        <span className="ml-[15px] w-11 tracking-[-0.05px] whitespace-nowrap">2:31 PM</span>
        <svg width="16" height="14" viewBox="0 0 16 14" className="ml-[7px]">
          <rect x=".5" y=".5" width="15" height="10.500" fill="#1e5fc8" stroke="#1c3c74" />
          <path d="M1 1h14L1 9z" fill="#5fa0ee" />
          <path d="M5 13h6" stroke="#444" strokeWidth="1.500" />
        </svg>
      </div>
    </div>
  );
}

function Watermark() {
  return (
    <div className="absolute top-[606px] left-[1040px] flex h-[68px] w-[194px] items-center font-[Roboto] text-[52px] leading-none font-normal text-white/80 [text-shadow:0_0_4px_rgba(120,125,135,0.5)]">
      <span className="w-[70px] origin-left scale-x-[0.57] pt-0.5">ANY</span>
      <svg width="58" height="68" viewBox="0 0 58 68" className="drop-shadow-[0_0_2px_rgba(110,115,125,0.55)]">
        <path d="M12 6v50L52 29z" fill="#f2f3f5" fillOpacity=".7" stroke="#fff" strokeWidth="3.500" />
        <path d="M17 22v24L36 33z" fill="#dcdee2" fillOpacity=".7" />
        <path d="M12 14 46 32" stroke="#e2e4e7" strokeWidth="1.500" />
        <path d="M5 18v46L54 38" fill="none" stroke="#f4f5f6" strokeOpacity=".7" strokeWidth="4" />
      </svg>
      <span className="w-[66px] origin-left scale-x-[0.6] pt-0.5">RUN</span>
    </div>
  );
}

export default function App() {
  return (
    <div className="relative h-[720px] w-[1280px] overflow-hidden bg-[#d6cfc7] font-['DejaVu_Sans_Condensed','DejaVu_Sans',sans-serif] text-[11px]">
      <OutlookWindow />
      <MeetingWindow />
      <MailWindow />
      <BrowserWindow />
      <Taskbar />
      <Watermark />
    </div>
  );
}
